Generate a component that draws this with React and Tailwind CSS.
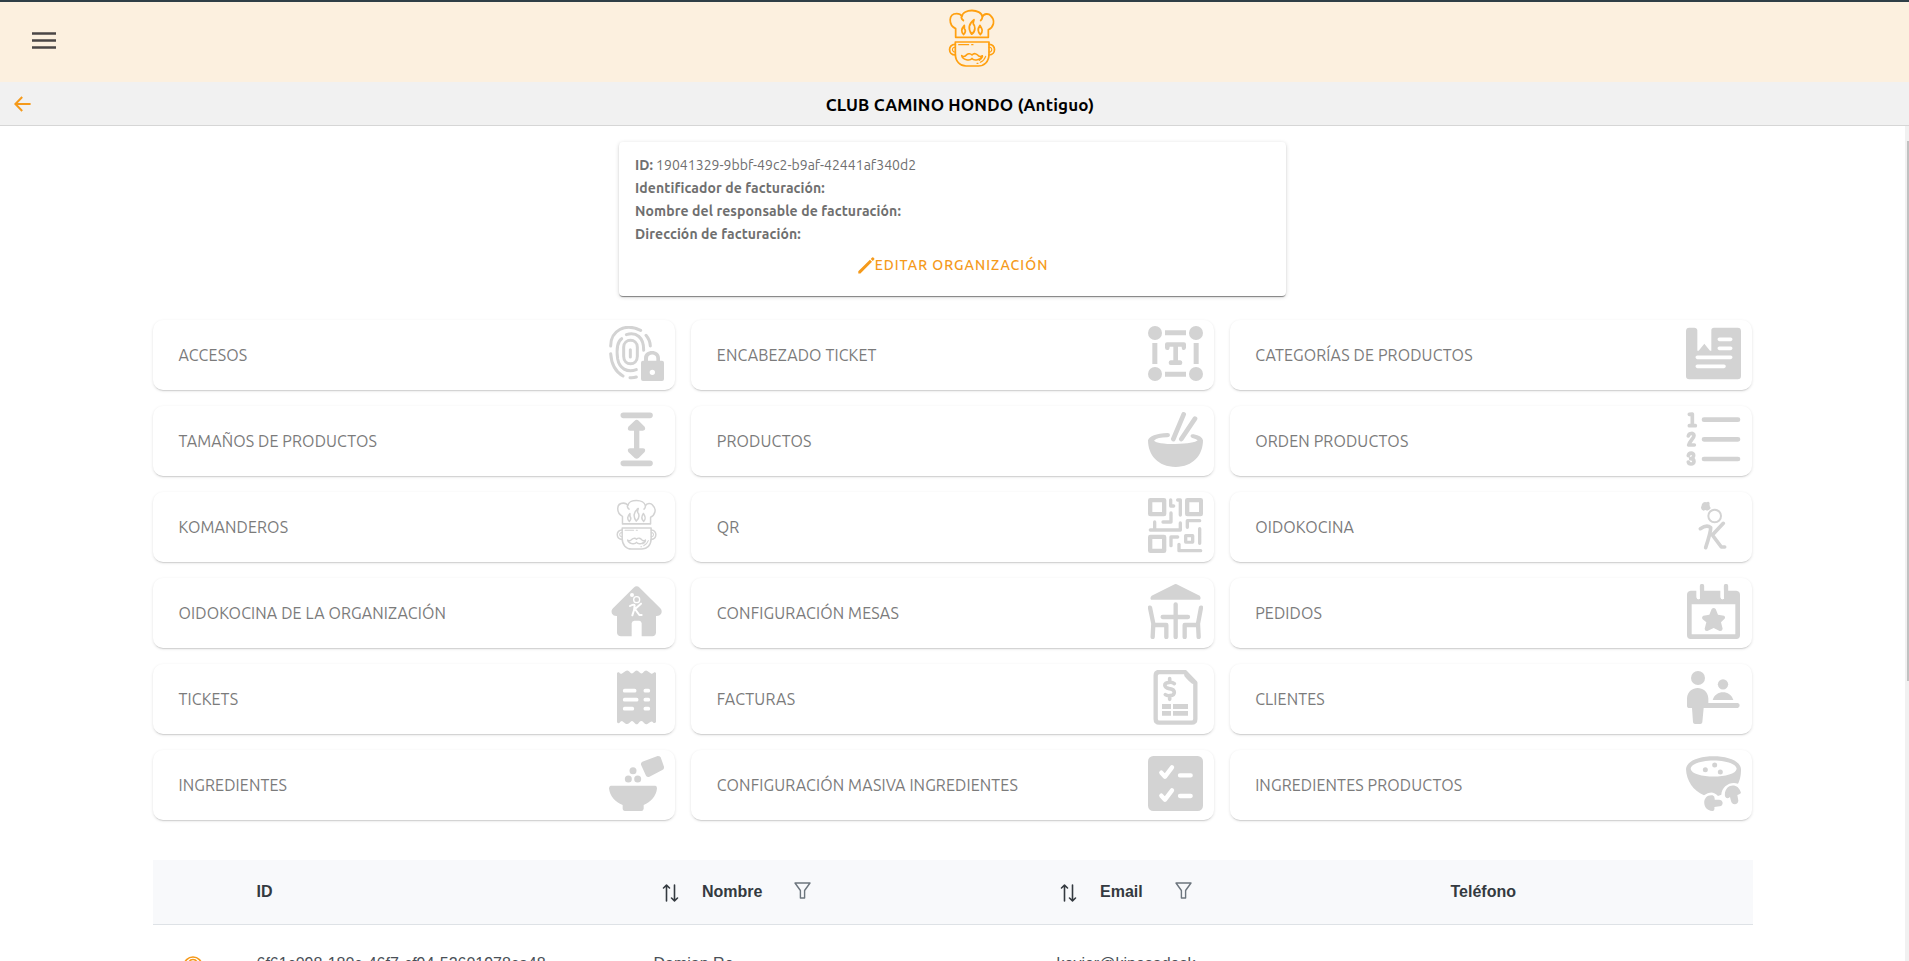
import React from "react";

const UI = "font-['Ubuntu','Noto_Sans',sans-serif]";

function ChefArt() {
  return (
    <g fill="none" stroke="currentColor" strokeWidth="5.2" strokeLinecap="round" strokeLinejoin="round">
      <g transform="translate(0 -8) scale(1 1.08)">
        <path d="M47 100V76C25 66 24 34 50 34C58 34 63 37 66 42C68 20 124 20 127 43C132 33 146 33 152 40C168 54 160 72 145 79V100Z" />
        <path d="M64 45Q65 50 70 53M127 45Q126 50 122 53" />
        <path d="M102 51C86 62 83 76 95 91C109 82 105 67 100 63C99 59 101 55 102 51Z" />
        <path d="M73 67C63 77 63 85 71 92C79 84 76 79 73 76ZM120 67C112 77 113 85 121 92C130 84 127 77 120 67Z" />
      </g>
      <path d="M46 114H147V150C147 174 132 186 115 186H78C60 186 46 172 46 150Z" />
      <path d="M46 121C23 120 23 153 46 153M147 121C169 120 169 153 147 153" />
      <path d="M46 130C34 128 35 145 46 144M147 130C158 128 158 145 147 144" strokeWidth="3.5" />
      <path d="M56 122H86M95 122H99" strokeWidth="3.5" />
      <path d="M96 153C90 146 82 150 78 154C74 158 68 158 65 155C68 168 90 172 96 163C102 172 123 168 127 155C123 158 118 158 114 154C110 149 102 146 96 153Z" strokeWidth="4.6" />
      <path d="M137 157C134 166 129 171 121 175M111 178H114M128 157Q125 167 118 169" strokeWidth="3.5" />
    </g>
  );
}

const stroke = (w) => ({ fill: "none", stroke: "currentColor", strokeWidth: w, strokeLinecap: "round", strokeLinejoin: "round" });

const icons = {
  access: (
    <svg viewBox="57 48 165 165" className="size-full" fill="currentColor">
      <g {...stroke(9)}>
        <path d="M62 108C62 62 105 38 152 61M168 76Q180 90 181 108M62 131C64 160 77 186 99 198M120 203Q130 204 139 201" />
        <path d="M95 86C76 99 81 131 83 147C88 175 111 189 139 179M109 74C139 65 162 82 161 121" />
        <path d="M101 112C101 84 142 84 142 112V139C142 169 101 169 101 139Z" />
        <path d="M121 119V141" strokeWidth="9" />
      </g>
      <path fillRule="evenodd" d="M153 158Q153 152 159 152H162V145C162 116 210 116 210 145V152H216Q222 152 222 158V207Q222 213 216 213H159Q153 213 153 207ZM174 152H199V145C199 130 174 130 174 145ZM187 179A8 8 0 1 0 187 195A8 8 0 1 0 187 179Z" />
    </svg>
  ),
  textBox: (
    <svg viewBox="54 48 165 165" className="size-full" fill="currentColor">
      <circle cx="75" cy="69" r="21" /><circle cx="198" cy="69" r="21" /><circle cx="75" cy="192" r="21" /><circle cx="198" cy="192" r="21" />
      <path d="M105 61H168V76H105ZM105 185H168V200H105ZM67 99H82V162H67ZM191 99H206V162H191Z" />
      <path d="M111 97H162Q168 97 168 103V113Q167 120 161 120Q155 120 155 110H144V151H151Q157 152 157 158Q157 165 151 165H122Q116 165 116 158Q116 152 122 151H130V110H119Q119 120 112 120Q105 120 105 113V103Q105 97 111 97Z" />
    </svg>
  ),
  bookmark: (
    <svg viewBox="48 48 165 165" className="size-full">
      <path fill="currentColor" d="M58 53H73Q81 53 82 61V122H86L103 101L120 122H124V61Q124 53 132 53H203Q213 53 213 63V198Q213 208 203 208H58Q48 208 48 198V63Q48 53 58 53Z" />
      <path d="M148 88H182M148 115H182M82 142H182M82 169H162" stroke="#fff" strokeWidth="11" strokeLinecap="round" />
    </svg>
  ),
  height: (
    <svg viewBox="57 306 165 165" className="size-full" fill="currentColor">
      <path d="M100 316H180M100 460H180" {...stroke(17)} />
      <path d="M146 332L164 350Q169 360 158 362H148V415H158Q169 416 164 426L146 444Q140 449 134 444L115 426Q110 416 121 415H132V362H121Q110 361 115 350L134 332Q140 327 146 332Z" />
    </svg>
  ),
  bowl: (
    <svg viewBox="54 306 165 165" className="size-full" fill="currentColor">
      <path d="M54 391Q60 372 113 369Q120 369 120 376Q119 382 112 382Q82 382 72 392Q82 402 136 402Q193 401 203 391Q198 386 187 384Q180 382 182 376Q184 371 191 373Q216 378 219 391C219 435 189 471 137 471C84 471 54 435 54 391Z" />
      <path d="M161 313L130 387M195 326L154 387" {...stroke(14)} />
    </svg>
  ),
  order: (
    <svg viewBox="48 306 165 165" className="size-full" fill="none">
      <path d="M102 329H204M102 388H204M102 447H204" {...stroke(14)} />
      <path d="M58 313L67 312V347M58 347H76M55 378C57 368 72 368 72 377C72 384 58 395 56 405H73M55 437C57 427 71 427 71 436C71 442 66 446 62 446C75 446 75 462 63 462Q56 462 55 456" {...stroke(11)} />
    </svg>
  ),
  chef: (
    <svg viewBox="57 564 165 165" className="size-full">
      <g transform="translate(57 554.3) scale(.86 .875)"><ChefArt /></g>
    </svg>
  ),
  qr: (
    <svg viewBox="54 564 165 165" className="size-full" fill="currentColor">
      <path fillRule="evenodd" d="M61 564H102Q109 564 109 571V612Q109 619 102 619H61Q54 619 54 612V571Q54 564 61 564ZM67 577V606H96V577ZM172 564H212Q219 564 219 571V612Q219 619 212 619H172Q165 619 165 612V571Q165 564 172 564ZM178 577V606H207V577ZM61 674H102Q109 674 109 681V722Q109 729 102 729H61Q54 729 54 722V681Q54 674 61 674ZM67 687V716H96V687ZM167 672H188Q193 672 193 677V696Q193 701 188 701H167Q162 701 162 696V677Q162 672 167 672ZM172 682V692H183V682Z" />
      <path d="M122 570V588H131M143 570H151V615M123 609V636H99M74 636V660M61 660H151V639M209 632H172V652M209 656V700M123 707V681H143M147 703V722H212" {...stroke(10)} />
    </svg>
  ),
  runner: (
    <svg viewBox="48 564 165 165" className="size-full" fill="currentColor">
      <path d="M96 582Q101 574 109 577Q117 573 119 580Q117 586 122 594Q119 601 111 602Q107 598 101 602Q93 600 93 592Q95 588 96 582Z" />
      <circle cx="134" cy="618" r="19" {...stroke(6)} />
      <path d="M91 656Q111 643 122 653Q123 664 107 713M160 640L127 675L154 711H164" {...stroke(11)} />
    </svg>
  ),
  house: (
    <svg viewBox="57 42 165 165" className="size-full">
      <path fill="currentColor" d="M131 53Q140 45 149 53L211 115Q218 123 213 132Q208 139 198 138V188Q197 198 187 199H155V160Q154 153 148 152H133Q126 153 125 160V199H93Q82 198 81 188V138Q71 139 66 131Q62 122 69 115Z" />
      <g fill="none" stroke="#fff" strokeLinecap="round" strokeLinejoin="round">
        <circle cx="140" cy="89" r="9" strokeWidth="4" />
        <path d="M120 108Q132 101 134 106Q134 118 127 136M153 101L135 117L148 135H155" strokeWidth="6" />
      </g>
      <circle cx="126" cy="75" r="6" fill="#fff" />
    </svg>
  ),
  tables: (
    <svg viewBox="54 42 165 165" className="size-full" fill="currentColor">
      <path d="M65 77L131 44Q137 40 143 44L209 77Q214 84 210 89H63Q59 84 65 77Z" />
      <path d="M137 103V201M98 141H174M60 113L70 161L68 201M70 165H109V201M213 113L204 161L206 201M204 165H164V201" {...stroke(13)} />
    </svg>
  ),
  calendar: (
    <svg viewBox="48 42 165 165" className="size-full" fill="currentColor">
      <path fillRule="evenodd" d="M62 62H79V82Q80 88 86 88Q91 88 91 82V62H151V82Q152 88 158 88Q164 88 164 82V62H199Q210 63 210 74V195Q210 207 199 207H62Q51 207 51 195V74Q51 63 62 62ZM65 103V193H196V103Z" />
      <path d="M96 48V82M168 48V82" {...stroke(13)} />
      <path d="M125 117Q131 111 137 117L144 134L162 137Q168 141 163 147L153 157L158 176Q157 184 149 183L131 174L112 183Q104 184 104 176L109 157L97 147Q94 140 100 137L118 134Z" />
      <path d="M85 62V84M157 62V84" stroke="#fff" strokeWidth="8" strokeLinecap="round" />
    </svg>
  ),
  receipt: (
    <svg viewBox="57 300 165 165" className="size-full">
      <path fill="currentColor" d="M81 309Q83 306 87 307Q91 313 95 311L107 303Q112 300 117 304L122 309Q126 312 130 308L136 303Q140 300 144 303L150 308Q154 312 158 309L163 304Q168 300 172 303L184 311Q188 312 193 307Q197 306 198 310V455Q196 461 190 458Q186 452 181 456L172 462Q167 464 163 460L157 454Q153 451 149 455L144 461Q140 464 136 461L130 455Q126 451 122 455L117 460Q112 464 107 461L96 453Q92 453 88 459Q82 461 81 455Z" />
      <path d="M104 362H134M166 362H175M104 389H140M166 389H175M104 416H127M166 416H175" stroke="#fff" strokeWidth="11" strokeLinecap="round" />
    </svg>
  ),
  invoice: (
    <svg viewBox="54 300 165 165" className="size-full" fill="currentColor">
      <path d="M84 306H165L196 338V447Q196 458 185 458H88Q77 458 77 447V317Q77 306 88 306Z" {...stroke(13)} />
      <path d="M163 312H167L190 335V343Q179 338 163 318Z" />
      <path d="M133 341Q127 336 118 337C99 338 101 353 118 356C138 359 137 376 120 377Q111 378 106 374M119 326V337M119 378V388" {...stroke(11)} />
      <path d="M96 402H123V417H96ZM129 402H174V417H129ZM96 423H123V437H96ZM129 423H174V437H129Z" />
    </svg>
  ),
  clients: (
    <svg viewBox="48 300 165 165" className="size-full" fill="currentColor">
      <circle cx="84" cy="324" r="21" /><circle cx="159" cy="343" r="15.5" />
      <path d="M128 390C137 359 181 359 190 390ZM51 385C54 344 112 344 115 385V399H203Q209 400 209 406Q209 413 203 414H101L97 457Q96 462 91 462H75Q70 462 69 457L66 414H55Q51 413 51 409Z" />
    </svg>
  ),
  ingredients: (
    <svg viewBox="57 558 165 165" className="size-full" fill="currentColor">
      <circle cx="129" cy="602" r="10.5" /><circle cx="115" cy="627" r="10.5" /><circle cx="143" cy="627" r="10.5" />
      <path d="M157 575L203 558Q209 558 212 562L222 590Q223 597 217 600L177 621Q171 622 168 617L153 584Q152 578 157 575Z" />
      <path d="M62 647H196Q201 648 201 655C199 679 182 697 161 705V716Q160 723 154 723H104Q98 722 98 716V705C76 697 59 678 57 655Q58 648 62 647Z" />
    </svg>
  ),
  checks: (
    <svg viewBox="54 558 165 165" className="size-full">
      <rect x="54" y="558" width="165" height="165" rx="16" fill="currentColor" />
      <path d="M94 608L105 620L126 592M150 616H182M94 677L105 689L126 661M150 678H182" fill="none" stroke="#fff" strokeWidth="13" strokeLinecap="round" strokeLinejoin="round" />
    </svg>
  ),
  soup: (
    <svg viewBox="48 558 165 165" className="size-full" fill="currentColor">
      <path fillRule="evenodd" d="M48 597C52 546 209 546 213 597C213 617 210 629 204 641C181 633 155 649 154 674L144 678Q126 658 102 676C69 662 49 631 48 597ZM62 596C65 627 197 627 200 596C194 563 68 563 62 596Z" />
      <circle cx="106" cy="599" r="7.5" /><circle cx="134" cy="585" r="7.5" /><circle cx="151" cy="606" r="7.5" />
      <path d="M165 679C160 642 205 633 213 669Q208 673 202 675L205 692Q204 702 194 703Q185 702 183 693L180 681Q170 690 165 679ZM128 676C94 671 94 724 129 723Q135 722 133 711L149 709Q158 707 158 698Q156 689 147 689H134Q135 678 128 676Z" />
    </svg>
  ),
};

const tiles = [
  ["ACCESOS", "access"], ["ENCABEZADO TICKET", "textBox"], ["CATEGORÍAS DE PRODUCTOS", "bookmark"],
  ["TAMAÑOS DE PRODUCTOS", "height"], ["PRODUCTOS", "bowl"], ["ORDEN PRODUCTOS", "order"],
  ["KOMANDEROS", "chef"], ["QR", "qr"], ["OIDOKOCINA", "runner"],
  ["OIDOKOCINA DE LA ORGANIZACIÓN", "house"], ["CONFIGURACIÓN MESAS", "tables"], ["PEDIDOS", "calendar"],
  ["TICKETS", "receipt"], ["FACTURAS", "invoice"], ["CLIENTES", "clients"],
  ["INGREDIENTES", "ingredients"], ["CONFIGURACIÓN MASIVA INGREDIENTES", "checks"], ["INGREDIENTES PRODUCTOS", "soup"],
];

function Tile({ label, icon }) {
  return (
    <button className="flex h-[70px] items-center justify-between rounded-[10px] bg-white pr-[11px] pl-[25.5px] shadow-[0_2px_1px_-1px_rgba(0,0,0,0.1),0_1px_3px_rgba(0,0,0,0.13)]">
      <span className="text-base tracking-[0.12px] text-[#7b7b7b]">{label}</span>
      <span className="mb-[3px] size-[55px] text-[#d3d3d3]">{icons[icon]}</span>
    </button>
  );
}

function SortIcon() {
  return (
    <svg viewBox="0 0 17 18" className="mt-[2px] h-[18px] w-[17px] shrink-0" fill="none" stroke="#343a40" strokeWidth="1.6" strokeLinecap="round" strokeLinejoin="round">
      <path d="M4.5 17V1.5M1.5 4L4.5 1.2L7.5 4M12.5 1V16.5M9.5 14L12.5 16.8L15.5 14" />
    </svg>
  );
}

function FilterIcon() {
  return (
    <svg viewBox="0 0 17 17" className="mb-[4px] h-[17px] w-[17px] shrink-0" fill="none" stroke="#6c757d" strokeWidth="1.4" strokeLinejoin="round">
      <path d="M1 1H16L10.6 8.5V16H6.4V8.5Z" />
    </svg>
  );
}

export default function App() {
  return (
    <div className={`flex h-[961px] w-full flex-col overflow-hidden bg-white ${UI}`}>
      <header className="flex h-[82px] shrink-0 items-start border-t-2 border-[#2f3e46] bg-[#fcf0df]">
        <button className="mt-[30px] ml-8">
          <svg viewBox="0 0 24 17" className="h-[17px] w-6" fill="#4a4646">
            <path d="M0 .2H24V2.8H0ZM0 7.2H24V9.8H0ZM0 14.2H24V16.8H0Z" />
          </svg>
        </button>
        <svg viewBox="0 0 198 210" className="mt-[2px] ml-[884px] h-[70px] w-[66px] text-[#ffa010]"><ChefArt /></svg>
      </header>
      <div className="flex h-11 shrink-0 items-center border-b border-[#d6d6d6] bg-[#f1f1f1]">
        <button className="mt-px ml-[14px]">
          <svg viewBox="0 0 17 16" className="h-4 w-[17px]" fill="none" stroke="#f59a1b" strokeWidth="2">
            <path d="M16.6 8H1.8M8.2 1L1.4 8L8.2 15" />
          </svg>
        </button>
        <h1 className="flex-1 pt-[3px] pr-5 text-center text-[17px] font-bold tracking-[0.15px] text-black">CLUB CAMINO HONDO (Antiguo)</h1>
      </div>
      <div className="flex min-h-0 flex-1">
        <main className="flex min-w-0 flex-1 flex-col items-center overflow-hidden pt-4">
          <section className="flex h-[154px] w-[667px] shrink-0 flex-col rounded bg-white px-4 pt-3 text-[14px] leading-[23px] text-[#6f6f6f] shadow-[0_2px_1px_-1px_rgba(0,0,0,0.3),0_1px_1px_rgba(0,0,0,0.2),0_1px_4px_rgba(0,0,0,0.16)]">
            <p><b>ID:</b> <span className="tracking-[0.03px]">19041329-9bbf-49c2-b9af-42441af340d2</span></p>
            <p className="font-bold tracking-[0.1px]">Identificador de facturación:</p>
            <p className="font-bold tracking-[0.1px]">Nombre del responsable de facturación:</p>
            <p className="font-bold tracking-[0.1px]">Dirección de facturación:</p>
            <button className="mt-[8px] flex items-center justify-center pl-px text-[14px] font-medium tracking-[1px] text-[#f59a1b]">
              <svg viewBox="0 0 17 17" className="h-[17px] w-[17px]" fill="currentColor">
                <path d="M.3 14.3L11.9 2.7L14 4.8L2.4 16.4L.3 16.6ZM12.7 1.9L14.1.5Q14.8 0 15.4.5L16.3 1.4Q16.8 2 16.2 2.6L14.8 4Z" />
              </svg>
              <span>EDITAR ORGANIZACIÓN</span>
            </button>
          </section>
          <section className="mt-6 grid w-[1599px] shrink-0 grid-cols-3 gap-4">
            {tiles.map(([label, icon]) => <Tile key={label} label={label} icon={icon} />)}
          </section>
          <section className="mt-10 w-[1600px] shrink-0 font-['Liberation_Sans',Arial,sans-serif] text-base text-[#495057]">
            <div className="grid h-[65px] grid-cols-[88px_397px_403px_394px_318px] items-center border-b border-[#dee2e6] bg-[#f8f9fb] font-bold text-[#343a40]">
              <span />
              <span className="pl-4">ID</span>
              <span className="flex items-center pl-6"><SortIcon /><span className="ml-[23.5px]">Nombre</span><span className="ml-[31.5px]"><FilterIcon /></span></span>
              <span className="flex items-center pl-[19px]"><SortIcon /><span className="ml-[23.5px]">Email</span><span className="ml-8"><FilterIcon /></span></span>
              <span className="pl-4">Teléfono</span>
            </div>
            <div className="grid h-[78px] grid-cols-[88px_397px_403px_394px_318px] items-center">
              <span className="flex pt-[3px] pl-[30px]">
                <svg viewBox="0 0 20 20" className="size-5" fill="none" stroke="#f59a1b" strokeWidth="1.6">
                  <circle cx="10" cy="10" r="9" /><path d="M5 10Q5.5 3.5 10 3.5Q14.5 3.5 15 10Q10 15 5 10Z" />
                </svg>
              </span>
              <span className="pl-4">6f61c098-180c-46f7-cf94-52601978ca48</span>
              <span className="pl-4">Damian Re</span>
              <span className="pl-4">kevier@kinesadesk</span>
              <span />
            </div>
          </section>
        </main>
        <div className="flex w-1 shrink-0 flex-col items-end bg-[#f1f1f1] pt-[15px]">
          <div className="h-[540px] w-0.5 bg-[#c1c1c1]" />
        </div>
      </div>
    </div>
  );
}
